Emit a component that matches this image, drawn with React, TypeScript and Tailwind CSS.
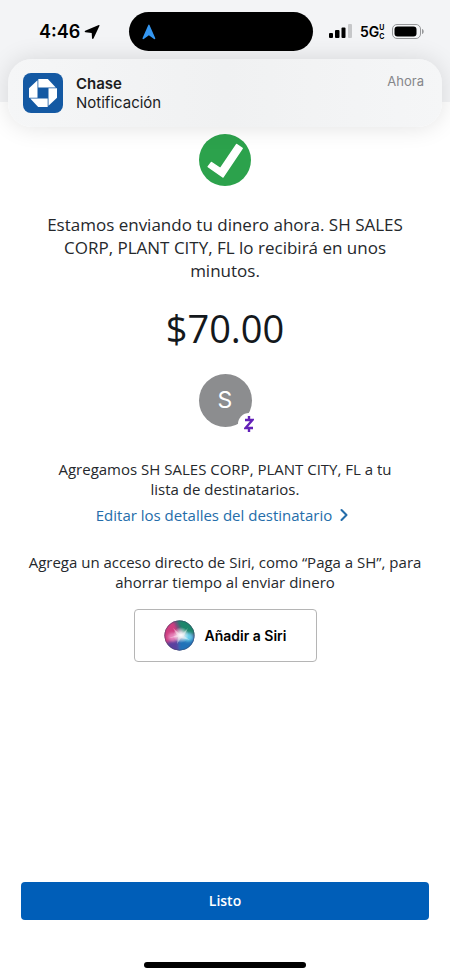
import { ChevronRight } from "lucide-react";

function StatusBar() {
  return (
    <div className="grid grid-cols-[1fr_184px_1fr] items-center pt-3 pr-2">
      <div className="flex items-center gap-1 pl-[39px]">
        <span className="text-lg font-semibold text-black">4:46</span>
        <svg className="h-4 w-4" viewBox="0 0 16 16" aria-hidden="true">
          <path d="M14.8 1.100c.5-.2.900.2.700.700L9.500 14.400c-.4.800-1.500.6-1.500-.4L7.700 8.900 1.500 8.300C.5 8.200.4 7.200 1.200 6.800z" fill="#000" />
        </svg>
      </div>

      <div className="flex h-[39px] items-center rounded-full bg-black pl-3">
        <svg className="h-4 w-4" viewBox="0 0 16 16" aria-hidden="true">
          <path d="M7.200 1.200Q7.900-.2 8.600 1.200L14.200 14Q14.600 15.600 13 15L7.900 11.300 2.800 15Q1.200 15.600 1.600 14z" fill="#3496f0" />
        </svg>
      </div>

      <div className="flex items-center gap-2 pl-4">
        <svg className="h-[15px] w-[23px] shrink-0" viewBox="0 0 23 15" aria-hidden="true">
          <rect x="0" y="9" width="4" height="5" rx="1" />
          <rect x="6" y="6" width="4.500" height="8" rx="1" />
          <rect x="12.500" y="3.500" width="4" height="10.500" rx="1" />
          <rect x="19" y="0" width="4" height="14" rx="1" fill="#c6c7c9" />
        </svg>
        <div className="flex items-center text-black">
          <span className="text-sm font-semibold">5G</span>
          <span className="grid text-[7px] leading-[9px] font-bold">
            <span>U</span>
            <span>C</span>
          </span>
        </div>
        <svg className="h-[15px] w-8 shrink-0" viewBox="0 0 32 15" aria-hidden="true">
          <rect x=".5" y=".5" width="28" height="14" rx="4.500" fill="none" stroke="#97989a" />
          <rect x="2.500" y="2.500" width="22" height="10" rx="3" />
          <path d="M30 5c2.300.6 2.300 4.400 0 5z" fill="#97989a" />
        </svg>
      </div>
    </div>
  );
}

function ChaseIcon() {
  return (
    <div className="flex h-10 w-10 items-center justify-center rounded-lg bg-[#1459a3]">
      <svg className="h-7 w-7" viewBox="0 0 28 28" aria-hidden="true">
        <g fill="#fff">
          <path d="M9.300 0h9.500l8 8.500H9.300z" />
          <path d="M28 9.300v9.500l-8.500 8V9.300z" />
          <path d="M18.700 28H9.200l-8-8.500h17.500z" />
          <path d="M0 18.700V9.200l8.500-8v17.500z" />
        </g>
      </svg>
    </div>
  );
}

function Notification() {
  return (
    <div className="absolute inset-x-2 top-[59px] flex items-center gap-[13px] rounded-3xl bg-linear-to-r from-[#f5f6f7] via-[#f0f1f2] to-[#f5f6f7] py-3.5 pr-[18px] pl-[15px] shadow-[0_0_24px_rgba(0,0,0,0.12)]">
      <ChaseIcon />
      <div className="flex-1 text-[15px] leading-[19px] text-[#1c1d1f]">
        <p className="font-semibold">Chase</p>
        <p>Notificación</p>
      </div>
      <span className="self-start text-[13px] leading-4 text-[#85868a]">Ahora</span>
    </div>
  );
}

function CheckBadge() {
  return (
    <svg className="h-[52px] w-[52px]" viewBox="0 0 52 52" aria-hidden="true">
      <circle cx="26" cy="26" r="26" fill="#2ca24c" />
      <path
        d="M9.200 32.700L12.500 28.500 21.500 34.500 37.700 10.500 43.200 14.300 23.900 43z"
        fill="#fff"
        stroke="#fff"
        strokeWidth="1.500"
        strokeLinejoin="round"
      />
    </svg>
  );
}

function Recipient() {
  return (
    <div className="relative flex h-[53px] w-[53px] items-center justify-center rounded-full bg-[#8c8d8f]">
      <span className="font-[Inter,sans-serif] text-[23px] text-white">S</span>
      <span className="absolute -right-2 -bottom-2 flex h-[22px] w-[22px] items-center justify-center rounded-full bg-white">
        <svg className="h-4 w-[10px]" viewBox="0 0 10 16" aria-hidden="true">
          <path d="M1 4h7.500L1.500 12H9M5 0v4M5 12v4" fill="none" stroke="#6321b8" strokeWidth="2.400" />
        </svg>
      </span>
    </div>
  );
}

function SiriIcon() {
  return (
    <svg className="h-[31px] w-[31px]" viewBox="0 0 31 31" aria-hidden="true">
      <defs>
        <clipPath id="orb">
          <circle cx="15.500" cy="15.500" r="15" />
        </clipPath>
        <filter id="soft" x="-50%" y="-50%" width="200%" height="200%">
          <feGaussianBlur stdDeviation="1.800" />
        </filter>
        <radialGradient id="glow">
          <stop offset="0" stopColor="#fff" />
          <stop offset=".3" stopColor="#fff" stopOpacity=".8" />
          <stop offset="1" stopColor="#fff" stopOpacity="0" />
        </radialGradient>
      </defs>
      <g clipPath="url(#orb)">
        <rect width="31" height="31" fill="#54527c" />
        <g filter="url(#soft)">
          <path d="M12-2h21v16H19z" fill="#1f866c" />
          <path d="M-2 3l12-2 6 14-7 11-11-4z" fill="#cf3d80" />
          <path d="M3 22l12-3 6 14H6z" fill="#5a3f9f" />
          <path d="M14 19l19-3-5 17H15z" fill="#2472b8" />
          <ellipse cx="24" cy="17" rx="5" ry="4" fill="#66cdec" />
          <ellipse cx="9" cy="17" rx="5" ry="4" fill="#e883bc" />
        </g>
        <circle cx="17" cy="15" r="8" fill="url(#glow)" />
        <path d="M9 8l8 7 7-7-4 8 6 4-9-2-4 6 1-7-9 1 8-3z" fill="#fff" opacity=".4" />
      </g>
      <circle cx="15.500" cy="15.500" r="14.700" fill="none" stroke="#3b4262" strokeOpacity=".4" />
    </svg>
  );
}

export default function App() {
  return (
    <div className="flex min-h-screen flex-col bg-white font-['Open_Sans',sans-serif] text-[#25282c]">
      <header className="relative h-[102px] bg-[#f3f4f6] font-[Inter,sans-serif]">
        <StatusBar />
        <Notification />
      </header>

      <main className="flex flex-1 flex-col items-center px-5 pt-8 text-center">
        <CheckBadge />
        <p className="mt-[27px] max-w-[360px] text-[17px] leading-[23px]">
          Estamos enviando tu dinero ahora. SH SALES CORP, PLANT CITY, FL lo recibirá en unos minutos.
        </p>
        <p className="mt-5 text-[38px] leading-[52px] text-[#14181c]">$70.00</p>
        <div className="mt-5">
          <Recipient />
        </div>
        <p className="mt-8 max-w-[340px] text-[15px] leading-5">
          Agregamos SH SALES CORP, PLANT CITY, FL a tu lista de destinatarios.
        </p>
        <a href="#destinatario" className="mt-[6px] flex items-center gap-[2px] text-[15px] leading-5 text-[#246daa]">
          Editar los detalles del destinatario
          <ChevronRight className="h-5 w-5" strokeWidth={2.5} aria-hidden="true" />
        </a>
        <p className="mt-[27px] max-w-[400px] text-[15px] leading-5">
          Agrega un acceso directo de Siri, como “Paga a SH”, para ahorrar tiempo al enviar dinero
        </p>
        <button
          type="button"
          className="mt-[17px] flex h-[53px] w-[183px] items-center justify-center gap-[10px] rounded border border-[#b5b5b5] bg-white font-[Inter,sans-serif] text-sm font-semibold text-black"
        >
          <SiriIcon />
          Añadir a Siri
        </button>
      </main>

      <footer className="flex flex-col items-center gap-[42px] px-[21px] pb-2">
        <button type="button" className="h-[38px] w-full rounded bg-[#005eb8] text-sm font-semibold text-white">
          Listo
        </button>
        <div className="h-[6px] w-[162px] rounded-full bg-black" />
      </footer>
    </div>
  );
}
